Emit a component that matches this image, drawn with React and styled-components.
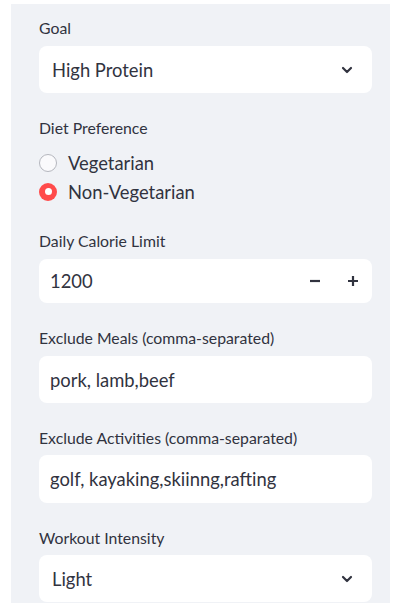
import React from "react";
import styled, { createGlobalStyle } from "styled-components";

const Global = createGlobalStyle`
  html, body { margin: 0; padding: 0; background: #ffffff; }
  body { font-family: Lato, "Liberation Sans", sans-serif; color: #31333f; }
  * { box-sizing: border-box; }
`;

const Page = styled.div`
  padding: 4px 0 0 11px;
  width: 418px;
  height: 613px;
`;

const Panel = styled.div`
  width: 379px;
  height: 599px;
  background: #f0f2f6;
  padding: 13px 18px 0 28px;
  overflow: hidden;
  display: flex;
  flex-direction: column;
  gap: 24px;
`;

const Field = styled.div`
  display: flex;
  flex-direction: column;
`;

const Label = styled.div`
  font-size: 15.8px;
  line-height: 22px;
  height: 22px;
  margin-bottom: ${(p) => p.$gap ?? 7}px;
  color: #31333f;
`;

const Box = styled.div`
  height: ${(p) => p.$h ?? 47}px;
  background: #ffffff;
  border-radius: 8px;
  display: flex;
  align-items: center;
  padding-left: ${(p) => p.$pl ?? 13}px;
  font-size: 18.4px;
  color: #31333f;
`;

const Value = styled.span`
  flex: 1;
  white-space: nowrap;
`;

const Chevron = styled.svg`
  width: 14px;
  height: 14px;
  margin-right: 18px;
`;

const Step = styled.div`
  width: 38px;
  height: 100%;
  display: flex;
  align-items: center;
  justify-content: center;
`;

const RadioList = styled.div`
  display: flex;
  flex-direction: column;
  margin-top: 1px;
`;

const RadioRow = styled.div`
  height: 29px;
  display: flex;
  align-items: center;
  gap: 11px;
  font-size: 18.4px;
`;

const Dot = styled.span`
  width: 18px;
  height: 18px;
  border-radius: 50%;
  flex: none;
  background: ${(p) => (p.$on ? "#ff4b4b" : "#fafafc")};
  border: ${(p) => (p.$on ? "none" : "1px solid #b5b7be")};
  display: flex;
  align-items: center;
  justify-content: center;
  &::after {
    content: "";
    display: ${(p) => (p.$on ? "block" : "none")};
    width: 7px;
    height: 7px;
    border-radius: 50%;
    background: #ffffff;
  }
`;

const Down = () => (
  <Chevron viewBox="0 0 14 14">
    <path d="M3 5 L7 9 L11 5" fill="none" stroke="#31333f" strokeWidth="2.2" strokeLinecap="round" strokeLinejoin="round" />
  </Chevron>
);

const Minus = () => (
  <svg width="14" height="14" viewBox="0 0 14 14">
    <path d="M2 7 H12" stroke="#31333f" strokeWidth="2.2" />
  </svg>
);

const Plus = () => (
  <svg width="14" height="14" viewBox="0 0 14 14">
    <path d="M2 7 H12 M7 2 V12" stroke="#31333f" strokeWidth="2.2" />
  </svg>
);

export default function App() {
  return (
    <Page>
      <Global />
      <Panel>
        <Field>
          <Label>Goal</Label>
          <Box>
            <Value>High Protein</Value>
            <Down />
          </Box>
        </Field>
        <Field>
          <Label $gap={8}>Diet Preference</Label>
          <RadioList>
            <RadioRow>
              <Dot />
              Vegetarian
            </RadioRow>
            <RadioRow>
              <Dot $on />
              Non-Vegetarian
            </RadioRow>
          </RadioList>
        </Field>
        <Field>
          <Label>Daily Calorie Limit</Label>
          <Box $h={44} $pl={11}>
            <Value>1200</Value>
            <Step><Minus /></Step>
            <Step><Plus /></Step>
          </Box>
        </Field>
        <Field>
          <Label>Exclude Meals (comma-separated)</Label>
          <Box $pl={11}>
            <Value>pork, lamb,beef</Value>
          </Box>
        </Field>
        <Field>
          <Label $gap={6}>Exclude Activities (comma-separated)</Label>
          <Box $pl={11} $h={48}>
            <Value>golf, kayaking,skiinng,rafting</Value>
          </Box>
        </Field>
        <Field>
          <Label $gap={6}>Workout Intensity</Label>
          <Box>
            <Value>Light</Value>
            <Down />
          </Box>
        </Field>
      </Panel>
    </Page>
  );
}
